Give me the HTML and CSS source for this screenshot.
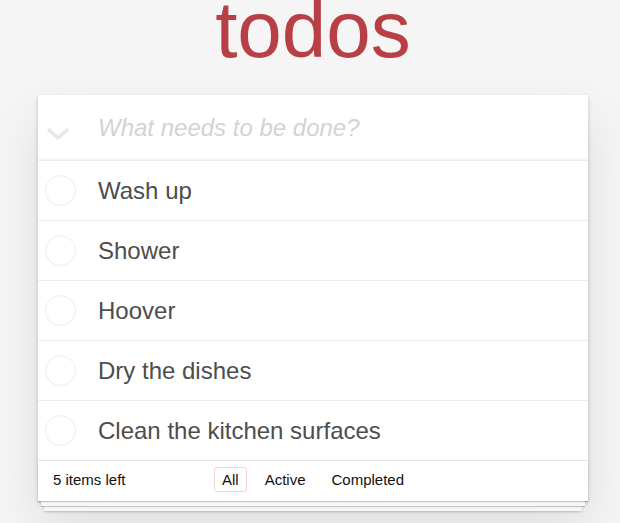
FILE: index.html
```html
<!DOCTYPE html>
<html lang="en">
<head>
<meta charset="utf-8">
<title>todos</title>
<link rel="stylesheet" href="styles.css">
</head>
<body>
<section class="todoapp">
  <header class="masthead"><h1 class="title">todos</h1></header>
  <div class="card">
    <div class="new-row">
      <span class="toggle-all">
        <svg width="24" height="14" viewBox="0 0 24 14"><polyline points="2,2 12,11 22,2" fill="none" stroke="#e6e6e6" stroke-width="3.5"/></svg>
      </span>
      <input class="new-todo" placeholder="What needs to be done?">
    </div>
    <ul class="todo-list">
      <li class="todo"><span class="check"></span><span class="todo-label">Wash up</span></li>
      <li class="todo"><span class="check"></span><span class="todo-label">Shower</span></li>
      <li class="todo"><span class="check"></span><span class="todo-label">Hoover</span></li>
      <li class="todo"><span class="check"></span><span class="todo-label">Dry the dishes</span></li>
      <li class="todo"><span class="check"></span><span class="todo-label">Clean the kitchen surfaces</span></li>
    </ul>
    <footer class="footer">
      <span class="todo-count">5 items left</span>
      <ul class="filters">
        <li><a class="filter selected">All</a></li>
        <li><a class="filter">Active</a></li>
        <li><a class="filter">Completed</a></li>
      </ul>
      <span class="spacer"></span>
    </footer>
  </div>
</section>
</body>
</html>
```
FILE: styles.css
```css
html, body {
  margin: 0;
  padding: 0;
}
body {
  background: #f5f5f5;
  font-family: "Liberation Sans", Arial, Helvetica, sans-serif;
  font-size: 14px;
  line-height: 1.4em;
  color: #4d4d4d;
}
.todoapp {
  width: 550px;
  margin-left: calc(50% - 272px);
  padding-bottom: 40px;
}
.masthead {
  height: 95px;
}
.title {
  margin: 0;
  font-size: 80px;
  line-height: 60px;
  font-weight: 400;
  color: #b83f45;
  text-align: center;
}
.card {
  background: #fff;
  box-shadow: 0 2px 4px 0 rgba(0, 0, 0, 0.2), 0 25px 50px 0 rgba(0, 0, 0, 0.1);
}
.new-row {
  height: 66px;
  display: flex;
  align-items: center;
  box-sizing: border-box;
  box-shadow: inset 0 -2px 1px rgba(0, 0, 0, 0.03);
  border-bottom: 1px solid #ededed;
}
.toggle-all {
  width: 60px;
  flex: none;
  box-sizing: border-box;
  padding-left: 8px;
  padding-top: 13px;
  display: flex;
}
.new-todo {
  flex: 1;
  border: none;
  outline: none;
  background: transparent;
  padding: 0;
  margin: 0;
  font-family: "Liberation Sans", Arial, Helvetica, sans-serif;
  font-size: 24px;
  line-height: 1.4em;
  color: #4d4d4d;
}
.new-todo::placeholder {
  font-style: italic;
  color: #d3d3d3;
}
.todo-list {
  list-style: none;
  margin: 0;
  padding: 0;
}
.todo {
  height: 60px;
  box-sizing: border-box;
  border-bottom: 1px solid #ededed;
  display: flex;
  align-items: center;
}
.todo:last-child {
  height: 59px;
  border-bottom: none;
}
.check {
  width: 31px;
  height: 31px;
  box-sizing: border-box;
  border: 1px solid #ededed;
  border-radius: 50%;
  margin-left: 7px;
  flex: none;
}
.todo-label {
  margin-left: 22px;
  padding-top: 1px;
  font-size: 24px;
  line-height: 1.2;
  color: #4d4d4d;
}
.footer {
  height: 41px;
  box-sizing: border-box;
  border-top: 1px solid #e6e6e6;
  padding: 0 15px 3px;
  font-size: 15px;
  display: grid;
  grid-template-columns: 1fr auto 1fr;
  align-items: center;
  color: #111;
  box-shadow: 0 1px 1px rgba(0, 0, 0, 0.2),
    0 8px 0 -3px #f6f6f6,
    0 9px 1px -3px rgba(0, 0, 0, 0.2),
    0 16px 0 -6px #f6f6f6,
    0 17px 2px -6px rgba(0, 0, 0, 0.2);
}
.todo-count {
  text-align: left;
}
.filters {
  list-style: none;
  margin: 0;
  padding: 0;
  display: flex;
  gap: 4px;
}
.filter {
  display: inline-block;
  margin: 3px;
  padding: 3px 7px;
  line-height: 17px;
  border: 1px solid transparent;
  border-radius: 3px;
  color: inherit;
}
.filter.selected {
  border-color: rgba(175, 47, 47, 0.2);
}
```
